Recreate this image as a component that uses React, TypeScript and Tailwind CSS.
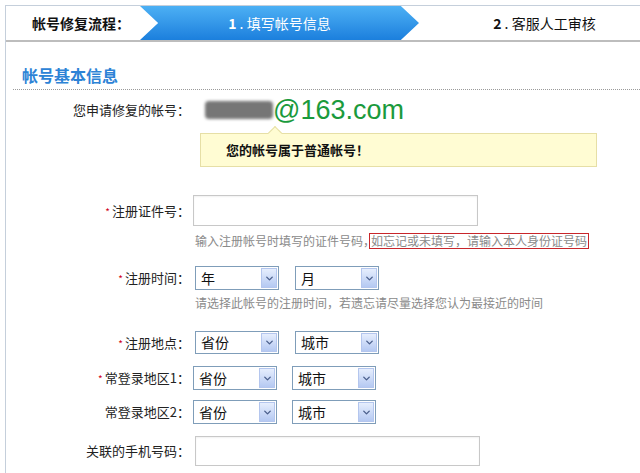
import { ChevronDown } from "lucide-react";

const font = "font-['Noto_Sans_CJK_SC','Noto_Sans',sans-serif]";

function Label({ text, required }: { text: string; required?: boolean }) {
  return (
    <div className="w-[184px] shrink-0 text-right text-[13px] text-[#222]">
      {required ? <span className="mr-[2px] text-[10px] text-[#d0021b]">*</span> : null}
      {text}
    </div>
  );
}

function FakeSelect({ value }: { value: string }) {
  return (
    <div className="flex h-full w-[84px] items-center justify-between border border-[#7f9db9] bg-white pl-[5px] pr-[1px]">
      <span className="text-[14px] text-[#111]">{value}</span>
      <span className="flex h-[calc(100%-2px)] w-[16px] items-center justify-center border border-[#b4c6ee] bg-gradient-to-b from-[#e6eefd] to-[#b5c9f2]">
        <ChevronDown className="size-[11px] text-[#4a5f8c]" strokeWidth={3} />
      </span>
    </div>
  );
}

function SelectRow({
  label,
  required,
  first,
  second,
  height,
  shift,
}: {
  label: string;
  required?: boolean;
  first: string;
  second: string;
  height: string;
  shift: boolean;
}) {
  return (
    <div className={`flex items-center ${height}`}>
      <Label text={label} required={required} />
      <div className={`flex h-full ${shift ? "ml-[3px] gap-[15px]" : "ml-[5px] gap-[16px]"}`}>
        <FakeSelect value={first} />
        <FakeSelect value={second} />
      </div>
    </div>
  );
}

export default function App() {
  return (
    <div className={`h-[473px] w-[640px] overflow-hidden bg-white pl-[5px] pt-[5px] ${font}`}>
      <div className="h-full border-l border-t border-[#c5cfdb]">
        {/* step header */}
        <div className="flex h-[36px] items-center border-b-2 border-[#bdbdbd]">
          <div className="flex w-[134px] shrink-0 justify-start">
            <span className="ml-[26px] whitespace-nowrap text-[14px] font-bold text-[#111]">帐号修复流程：</span>
          </div>
          <div className="flex h-[34px] w-[279px] shrink-0 items-center justify-center bg-gradient-to-b from-[#4cb0f4] to-[#1b7fdd] text-[14px] text-white [clip-path:polygon(0_0,93.5%_0,100%_50%,93.5%_100%,0_100%,6.5%_50%)]">
            <span className="font-bold">1</span>
            <span className="ml-[3px]">. 填写帐号信息</span>
          </div>
          <div className="flex flex-1 justify-center pl-[30px] text-[14px] text-[#111]">
            <span className="font-bold">2</span>
            <span className="ml-[3px]">. 客服人工审核</span>
          </div>
        </div>

        {/* section title */}
        <div className="ml-[7px] mt-[21px] border-b border-dotted border-[#9a9a9a] pb-[2px] pl-[9px]">
          <div className="text-[16px] font-bold leading-[24px] text-[#2d83d6]">帐号基本信息</div>
        </div>

        <div className="mt-[6px] flex h-[28px] items-center">
          <Label text="您申请修复的帐号：" />
          <div className="ml-[15px] flex items-center">
            <div className="h-[18px] w-[68px] rounded-[4px] bg-[#767676] blur-[1.5px]" />
            <span className="font-['Liberation_Sans',sans-serif] text-[27px] leading-none text-[#1a9a3c]">@163.com</span>
          </div>
        </div>

        <div className="relative ml-[194px] mt-[9px] flex h-[34px] w-[397px] items-center border border-[#e6dfa6] bg-[#fffcd3] pl-[25px] text-[13px] font-bold text-[#111]">
          <span className="absolute -top-[6px] left-[69px] size-[10px] rotate-45 border-l border-t border-[#e6dfa6] bg-[#fffcd3]" />
          您的帐号属于普通帐号！
        </div>

        <div className="mt-[28px] flex h-[31px] items-center">
          <Label text="注册证件号：" required />
          <div className="ml-[3px] h-full w-[285px] border border-[#c8c8c8] bg-white shadow-[inset_0_1px_2px_rgba(0,0,0,0.06)]" />
        </div>
        <div className="ml-[189px] mt-[7px] flex h-[16px] items-center text-[12px] text-[#8a8a8a]">
          输入注册帐号时填写的证件号码，
          <span className="-ml-[6px] border border-[#c8262b] pl-[1px] pr-[1px] leading-[14px]">如忘记或未填写，请输入本人身份证号码</span>
        </div>

        <div className="mt-[17px]">
          <SelectRow label="注册时间：" required first="年" second="月" height="h-[24px]" shift={false} />
        </div>
        <div className="ml-[189px] mt-[5px] h-[16px] text-[12px] leading-[16px] text-[#8a8a8a]">
          请选择此帐号的注册时间，若遗忘请尽量选择您认为最接近的时间
        </div>

        <div className="mt-[20px]">
          <SelectRow label="注册地点：" required first="省份" second="城市" height="h-[23px]" shift={false} />
        </div>
        <div className="mt-[12px]">
          <SelectRow label="常登录地区1：" required first="省份" second="城市" height="h-[24px]" shift />
        </div>
        <div className="mt-[10px]">
          <SelectRow label="常登录地区2：" first="省份" second="城市" height="h-[24px]" shift />
        </div>

        <div className="mt-[12px] flex h-[30px] items-center">
          <Label text="关联的手机号码：" />
          <div className="ml-[5px] h-full w-[285px] border border-[#c8c8c8] bg-white shadow-[inset_0_1px_2px_rgba(0,0,0,0.06)]" />
        </div>
      </div>
    </div>
  );
}
